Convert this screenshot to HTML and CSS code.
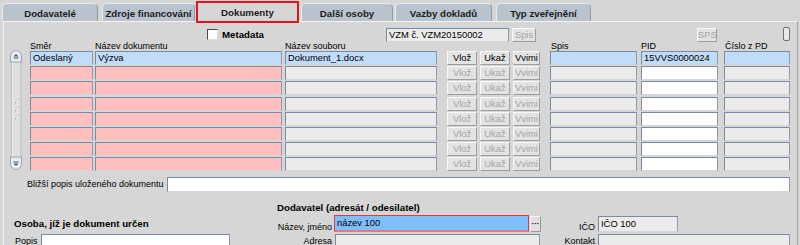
FILE: index.html
```html
<!DOCTYPE html>
<html lang="cs">
<head>
<meta charset="utf-8">
<title>Dokumenty</title>
<link rel="stylesheet" href="styles.css">
</head>
<body>
<div class="tabs">
  <div class="tab t1">Dodavatelé</div>
  <div class="tab t2">Zdroje financování</div>
  <div class="tab t3 active">Dokumenty</div>
  <div class="tab t4">Další osoby</div>
  <div class="tab t5">Vazby dokladů</div>
  <div class="tab t6">Typ zveřejnění</div>
</div>
<div class="panel">
  <div class="toolbar">
    <div class="meta"><span class="cbox"></span><span>Metadata</span></div>
    <div class="f grey vzm">VZM č. VZM20150002</div>
    <div class="b dis spisbtn">Spis</div>
    <div class="b dis sps">SPS</div>
    <div class="mini"></div>
  </div>
  <div class="table">
    <div class="scroll">
      <svg width="12" height="121" viewBox="0 0 12 121">
        <rect x="1.5" y="6" width="9.5" height="108" fill="#dedede" stroke="#bdbdbd"/>
        <line x1="2.5" y1="12" x2="2.5" y2="108" stroke="#f2f2f2"/>
        <path d="M0.5 12 V6 A5.5 5.5 0 0 1 11.5 6 V12 Z" fill="#e8ebef" stroke="#98a3b1"/>
        <path d="M3.5 6.5 L6 4 L8.5 6.5 Z" fill="#4a5a70"/>
        <line x1="3.5" y1="8" x2="8.5" y2="8" stroke="#4a5a70"/>
        <path d="M0.5 107 V114 A5.5 5.5 0 0 0 11.5 114 V107 Z" fill="#e8ebef" stroke="#98a3b1"/>
        <path d="M3.5 113.5 L6 116 L8.5 113.5 Z" fill="#4a5a70"/>
        <line x1="3.5" y1="112" x2="8.5" y2="112" stroke="#4a5a70"/>
        <g fill="#ffffff">
          <rect x="7" y="47" width="1" height="1"/><rect x="4" y="51" width="1" height="1"/>
          <rect x="7" y="55" width="1" height="1"/><rect x="4" y="59" width="1" height="1"/>
          <rect x="7" y="63" width="1" height="1"/><rect x="4" y="67" width="1" height="1"/>
        </g>
        <g fill="#9a9a9a">
          <rect x="8" y="48" width="1" height="1"/><rect x="5" y="52" width="1" height="1"/>
          <rect x="8" y="56" width="1" height="1"/><rect x="5" y="60" width="1" height="1"/>
          <rect x="8" y="64" width="1" height="1"/><rect x="5" y="68" width="1" height="1"/>
        </g>
      </svg>
    </div>
    <div class="cols">
      <div class="hdr">
        <div class="c1">Směr</div>
        <div class="c2">Název dokumentu</div>
        <div class="c3">Název souboru</div>
        <div class="c4"></div><div class="c5"></div><div class="c6"></div>
        <div class="c7 pl1">Spis</div>
        <div class="c8">PID</div>
        <div class="c9 pl1">Číslo z PD</div>
      </div>
      <div class="row">
        <div class="f blue c1">Odeslaný</div>
        <div class="f blue c2">Výzva</div>
        <div class="f blue c3">Dokument_1.docx</div>
        <div class="b c4">Vlož</div><div class="b c5">Ukaž</div><div class="b c6">Vvimi</div>
        <div class="f blue c7"></div>
        <div class="f blue c8">15VVS0000024</div>
        <div class="f blue c9"></div>
      </div>
      <div class="row">
        <div class="f pink c1"></div><div class="f pink c2"></div><div class="f grey c3"></div>
        <div class="b dis c4">Vlož</div><div class="b dis c5">Ukaž</div><div class="b dis c6">Vvimi</div>
        <div class="f grey c7"></div><div class="f white c8"></div><div class="f grey c9"></div>
      </div>
      <div class="row">
        <div class="f pink c1"></div><div class="f pink c2"></div><div class="f grey c3"></div>
        <div class="b dis c4">Vlož</div><div class="b dis c5">Ukaž</div><div class="b dis c6">Vvimi</div>
        <div class="f grey c7"></div><div class="f white c8"></div><div class="f grey c9"></div>
      </div>
      <div class="row">
        <div class="f pink c1"></div><div class="f pink c2"></div><div class="f grey c3"></div>
        <div class="b dis c4">Vlož</div><div class="b dis c5">Ukaž</div><div class="b dis c6">Vvimi</div>
        <div class="f grey c7"></div><div class="f white c8"></div><div class="f grey c9"></div>
      </div>
      <div class="row">
        <div class="f pink c1"></div><div class="f pink c2"></div><div class="f grey c3"></div>
        <div class="b dis c4">Vlož</div><div class="b dis c5">Ukaž</div><div class="b dis c6">Vvimi</div>
        <div class="f grey c7"></div><div class="f white c8"></div><div class="f grey c9"></div>
      </div>
      <div class="row">
        <div class="f pink c1"></div><div class="f pink c2"></div><div class="f grey c3"></div>
        <div class="b dis c4">Vlož</div><div class="b dis c5">Ukaž</div><div class="b dis c6">Vvimi</div>
        <div class="f grey c7"></div><div class="f white c8"></div><div class="f grey c9"></div>
      </div>
      <div class="row">
        <div class="f pink c1"></div><div class="f pink c2"></div><div class="f grey c3"></div>
        <div class="b dis c4">Vlož</div><div class="b dis c5">Ukaž</div><div class="b dis c6">Vvimi</div>
        <div class="f grey c7"></div><div class="f white c8"></div><div class="f grey c9"></div>
      </div>
      <div class="row">
        <div class="f pink c1"></div><div class="f pink c2"></div><div class="f grey c3"></div>
        <div class="b dis c4">Vlož</div><div class="b dis c5">Ukaž</div><div class="b dis c6">Vvimi</div>
        <div class="f grey c7"></div><div class="f white c8"></div><div class="f grey c9"></div>
      </div>
    </div>
  </div>
  <div class="desc">
    <span class="desc-label">Bližší popis uloženého dokumentu</span>
    <div class="f white desc-field"></div>
  </div>
  <div class="bottom">
    <div class="cell a1"></div>
    <div class="cell a2 head">Dodavatel (adresát / odesilatel)</div>
    <div class="cell a3"></div>

    <div class="cell b1 head osoba">Osoba, jíž je dokument určen</div>
    <div class="cell b2">
      <span class="lbl l2">Název, jméno</span>
      <div class="f nazev">název 100</div>
      <div class="dots">···</div>
    </div>
    <div class="cell b3">
      <span class="lbl l3">IČO</span>
      <div class="f grey ico">IČO 100</div>
    </div>

    <div class="cell c1b">
      <span class="lbl popis">Popis</span>
      <div class="f white popis-f"></div>
    </div>
    <div class="cell c2b">
      <span class="lbl l2">Adresa</span>
      <div class="f grey adresa"></div>
    </div>
    <div class="cell c3b">
      <span class="lbl l3">Kontakt</span>
      <div class="f grey kontakt"></div>
    </div>
  </div>
</div>
</body>
</html>
```

FILE: styles.css
```css
* { box-sizing: border-box; }

body {
  margin: 0;
  width: 800px;
  height: 245px;
  overflow: hidden;
  background: #d6d6d6;
  font-family: "Liberation Sans", Arial, sans-serif;
  font-size: 9px;
  color: #000;
}

/* Tabs */
.tabs {
  display: flex;
  align-items: flex-end;
  height: 21px;
  padding-left: 2px;
  position: relative;
  z-index: 1;
}
.tab {
  height: 18px;
  background: #b8c3cd;
  border: 1px solid #8e9aa6;
  border-top-color: #e6ebf0;
  border-left-color: #e6ebf0;
  border-bottom: none;
  border-radius: 5px 5px 0 0;
  display: flex;
  align-items: center;
  justify-content: center;
  font-weight: bold;
  font-size: 9.7px;
  color: #1c1c1c;
  padding-top: 1px;
}
.t1 { width: 96px; }
.t2 { width: 93px; margin-left: 4px; }
.t3 { width: 103px; margin-left: 1px; }
.t4 { width: 92px; margin-left: 2px; }
.t5 { width: 97px; margin-left: 2px; }
.t6 { width: 95px; margin-left: 4px; }
.tab.active {
  height: 22px;
  background: #d6d6d6;
  border: 2px solid #e5141c;
  border-radius: 0;
  margin-bottom: -2px;
  padding-top: 0;
}

/* Panel */
.panel {
  margin-left: 3px;
  width: 795px;
  height: 230px;
  border-top: 1px solid #f2f2f2;
  border-left: 1px solid #f2f2f2;
  border-right: 1px solid #a3a3a3;
}

.toolbar {
  display: flex;
  align-items: center;
  height: 15px;
  margin-top: 5px;
}
.meta {
  display: flex;
  align-items: center;
  gap: 4px;
  width: 179px;
  margin-left: 203px;
  font-weight: bold;
  font-size: 9.7px;
}
.cbox {
  width: 11px;
  height: 11px;
  background: #fff;
  border: 1px solid;
  border-color: #4c4c4c #dcdcdc #dcdcdc #4c4c4c;
}
.vzm { width: 123px; height: 15px; line-height: 13px; }
.spisbtn { width: 24px; margin-left: 3px; height: 15px; line-height: 13px; }
.sps { width: 20px; margin-left: 161px; height: 15px; line-height: 13px; }
.mini {
  width: 7px;
  height: 14px;
  margin-left: 66px;
  margin-top: -2px;
  background: #e8e8e8;
  border: 1px solid #6f6f6f;
  border-radius: 2px;
}

/* Fields & buttons */
.f {
  height: 14px;
  border: 1px solid;
  border-color: #7b8aa0 #8e9aac #d2d5da #7b8aa0;
  font-size: 9.4px;
  line-height: 12px;
  padding-left: 2px;
  white-space: nowrap;
  overflow: hidden;
}
.blue { background: #c0dcf8; }
.pink { background: #ffbfbf; }
.grey { background: #ebebeb; }
.white { background: #ffffff; }

.b {
  height: 14px;
  background: #e3e3e3;
  border: 1px solid;
  border-color: #f7f7f7 #9d9d9d #9d9d9d #f7f7f7;
  font-size: 9.4px;
  line-height: 12px;
  text-align: center;
  white-space: nowrap;
  color: #000;
}
.b.dis { color: #a4a4a4; }

/* Table */
.table {
  display: flex;
  margin-left: 6px;
}
.scroll {
  width: 12px;
  height: 121px;
  margin-top: 8px;
}
.scroll svg { display: block; }
.cols { margin-left: 8px; }

.hdr {
  display: flex;
  height: 9px;
  line-height: 8px;
  white-space: nowrap;
}
.row {
  display: flex;
  height: 14px;
  margin-bottom: 1.2px;
}
.c1 { width: 63px; flex: none; }
.c2 { width: 187px; margin-left: 2px; flex: none; }
.c3 { width: 152px; margin-left: 3px; flex: none; }
.c4 { width: 30px; margin-left: 10px; flex: none; }
.c5 { width: 30px; margin-left: 3px; flex: none; }
.c6 { width: 27px; margin-left: 3px; flex: none; }
.c7 { width: 87px; margin-left: 10px; flex: none; }
.c8 { width: 77px; margin-left: 4px; flex: none; }
.c9 { width: 66px; margin-left: 6px; flex: none; }
.pl1 { padding-left: 1px; }

/* Description */
.desc {
  display: flex;
  align-items: center;
  height: 15px;
  margin-top: 4px;
}
.desc-label { width: 140px; margin-left: 23px; white-space: nowrap; }
.desc-field { width: 623px; height: 15px; }

/* Bottom form */
.bottom {
  display: grid;
  grid-template-columns: 272px 284px 1fr;
  grid-template-rows: 13px 17px 17px;
  row-gap: 1px;
  margin-top: 9px;
}
.cell { display: flex; align-items: center; white-space: nowrap; }
.head { font-weight: bold; font-size: 9.7px; }
.a2 { align-items: flex-end; padding-bottom: 1px; padding-left: 1px; }
.osoba { padding-left: 10px; }
.lbl { text-align: right; flex: none; }
.l2 { width: 56px; }
.l3 { width: 35px; }
.b2, .b3 { align-items: flex-end; }
.nazev {
  width: 195px;
  height: 17px;
  margin-left: 2px;
  background: #80bfff;
  border: 1px solid #e23a3e;
  border-bottom: 2px solid #e77a7a;
  line-height: 14px;
}
.dots {
  width: 11px;
  height: 16px;
  margin-left: 1px;
  background: #e0e0e0;
  border: 1px solid;
  border-color: #f5f5f5 #9a9a9a #9a9a9a #f5f5f5;
  font-weight: bold;
  font-size: 8px;
  line-height: 13px;
  text-align: center;
  letter-spacing: 0;
  overflow: hidden;
}
.ico { width: 80px; height: 16px; margin-left: 3px; line-height: 14px; }
.c1b { align-items: flex-start; padding-top: 1px; }
.popis { text-align: left; padding-left: 11px; width: 37px; line-height: 15px; }
.popis-f { width: 189px; height: 16px; }
.c2b, .c3b { align-items: flex-start; padding-top: 1px; }
.c2b .lbl, .c3b .lbl { line-height: 15px; }
.adresa { width: 205px; height: 16px; margin-left: 3px; }
.kontakt { width: 192px; height: 16px; margin-left: 3px; }
```
